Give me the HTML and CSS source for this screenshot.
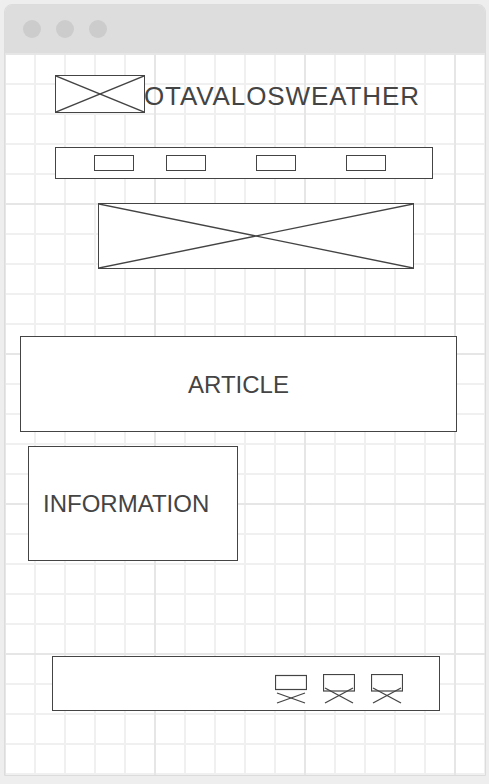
FILE: index.html
```html
<!DOCTYPE html>
<html lang="en">
<head>
    <meta charset="UTF-8">
    <meta name="viewport" content="width=device-width, initial-scale=1.0">
    <title>Otavalo Weather - Wireframe</title>
    <link rel="stylesheet" href="styles.css">
</head>
<body>
    <div class="window">
        <div class="titlebar">
            <span class="dot"></span>
            <span class="dot"></span>
            <span class="dot"></span>
        </div>

        <div class="page">
            <header class="header">
                <div class="placeholder logo">
                    <svg viewBox="0 0 100 100" preserveAspectRatio="none">
                        <line x1="0" y1="0" x2="100" y2="100"/>
                        <line x1="0" y1="100" x2="100" y2="0"/>
                    </svg>
                </div>
                <div class="site-title">OTAVALOSWEATHER</div>
            </header>

            <nav class="nav">
                <div class="nav-item first"></div>
                <div class="nav-item"></div>
                <div class="nav-item"></div>
                <div class="nav-item"></div>
            </nav>

            <div class="placeholder banner">
                <svg viewBox="0 0 100 100" preserveAspectRatio="none">
                    <line x1="0" y1="0" x2="100" y2="100"/>
                    <line x1="0" y1="100" x2="100" y2="0"/>
                </svg>
            </div>

            <section class="article">ARTICLE</section>

            <aside class="information">INFORMATION</aside>

            <footer class="footer">
                <svg class="social" viewBox="0 0 32 30">
                    <rect x="0.5" y="1.5" width="31" height="14"/>
                    <line x1="2" y1="19" x2="30" y2="29"/>
                    <line x1="2" y1="29" x2="30" y2="19"/>
                </svg>
                <svg class="social" viewBox="0 0 32 30">
                    <rect x="0.5" y="0.5" width="31" height="16.5"/>
                    <line x1="2" y1="14" x2="30" y2="29"/>
                    <line x1="2" y1="29" x2="30" y2="14"/>
                </svg>
                <svg class="social" viewBox="0 0 32 30">
                    <rect x="0.5" y="0.5" width="31" height="16.5"/>
                    <line x1="2" y1="14" x2="30" y2="29"/>
                    <line x1="2" y1="29" x2="30" y2="14"/>
                </svg>
            </footer>
        </div>
    </div>
</body>
</html>
```

FILE: styles.css
```css
body {
    margin: 0;
    padding: 4px 0 0 4px;
    background-color: #eeeeee;
    font-family: 'Liberation Sans', Arial, sans-serif;
    color: #444;
}

.window {
    width: 482px;
    box-sizing: border-box;
    border: 1px solid #dcdcdc;
    border-radius: 8px 8px 0 0;
    overflow: hidden;
}

.titlebar {
    height: 48px;
    background-color: #dddddd;
    display: flex;
    align-items: center;
    gap: 15px;
    padding-left: 18px;
}

.dot {
    width: 18px;
    height: 18px;
    border-radius: 50%;
    background-color: #cccccc;
}

.page {
    height: 722px;
    background-color: #fff;
    background-image:
        linear-gradient(to right, #e6e6e6 2px, transparent 2px),
        linear-gradient(to bottom, #e6e6e6 2px, transparent 2px),
        linear-gradient(to right, #f0f0f0 2px, transparent 2px),
        linear-gradient(to bottom, #f0f0f0 2px, transparent 2px);
    background-size: 150px 150px, 150px 150px, 30px 30px, 30px 30px;
    background-position: -1px 0, -1px 0, -1px 0, -1px 0;
    display: flex;
    flex-direction: column;
    align-items: flex-start;
    padding-top: 22px;
    box-sizing: border-box;
}

.placeholder {
    box-sizing: border-box;
    border: 1px solid #444;
    background-color: #fff;
}

.placeholder svg {
    display: block;
    width: 100%;
    height: 100%;
}

.placeholder line {
    stroke: #444;
    stroke-width: 1.4;
    vector-effect: non-scaling-stroke;
}

/* header */
.header {
    display: flex;
    align-items: center;
    margin-left: 50px;
}

.logo {
    width: 90px;
    height: 38px;
}

.site-title {
    font-size: 26px;
    letter-spacing: 0.9px;
    margin-top: 4px;
    margin-left: -1px;
}

/* nav */
.nav {
    width: 378px;
    height: 32px;
    box-sizing: border-box;
    border: 1px solid #444;
    background-color: #fff;
    margin: 34px 0 0 50px;
    padding-left: 38px;
    display: flex;
    align-items: center;
    gap: 50px;
}

.nav-item {
    width: 40px;
    height: 16px;
    box-sizing: border-box;
    border: 1px solid #444;
}

.nav-item.first {
    margin-right: -18px;
}

.banner {
    width: 316px;
    height: 66px;
    margin: 24px 0 0 93px;
}

.article {
    width: 437px;
    height: 96px;
    box-sizing: border-box;
    border: 1px solid #444;
    background-color: #fff;
    margin: 67px 0 0 15px;
    padding-top: 2px;
    display: flex;
    align-items: center;
    justify-content: center;
    font-size: 24px;
}

.information {
    width: 210px;
    height: 115px;
    box-sizing: border-box;
    border: 1px solid #444;
    background-color: #fff;
    margin: 14px 0 0 23px;
    padding-left: 14px;
    display: flex;
    align-items: center;
    font-size: 24px;
}

.footer {
    width: 388px;
    height: 55px;
    box-sizing: border-box;
    border: 1px solid #444;
    background-color: #fff;
    margin: 95px 0 0 47px;
    padding: 17px 36px 0 0;
    display: flex;
    justify-content: flex-end;
    align-items: flex-start;
    gap: 16px;
}

.social {
    width: 32px;
    height: 30px;
}

.social rect {
    fill: none;
    stroke: #444;
    stroke-width: 1.2;
}

.social line {
    stroke: #444;
    stroke-width: 1.3;
}
```
